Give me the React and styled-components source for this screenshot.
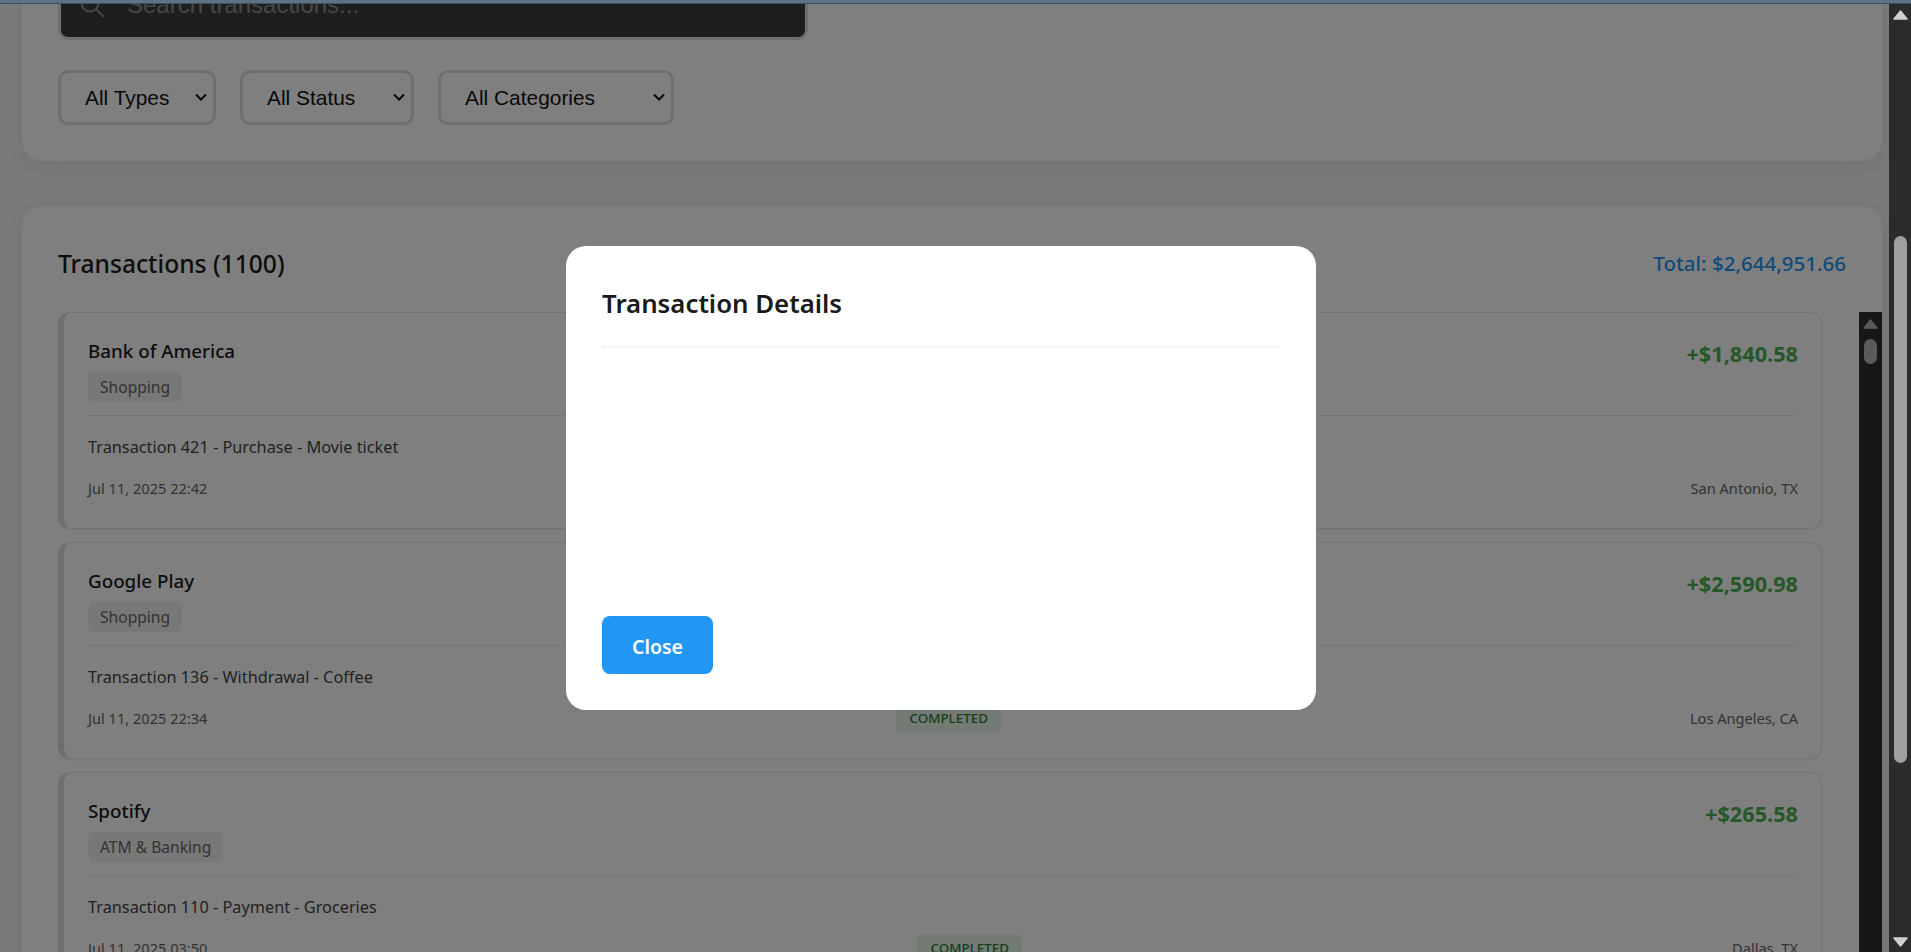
import React from "react";
import styled, { createGlobalStyle } from "styled-components";

const Global = createGlobalStyle`
  html, body {
    margin: 0;
    height: 100%;
    overflow: hidden;
    background: #f5f5f5;
  }
  * {
    box-sizing: border-box;
  }
`;

const UI_FONT = `"Noto Sans", "Open Sans", sans-serif`;

const Shell = styled.div`
  display: flex;
  height: 952px;
  width: 1911px;
  overflow: hidden;
  font-family: ${UI_FONT};
  color: #1a1a1a;
`;
const TopLine = styled.div`
  position: fixed;
  top: 0;
  left: 0;
  right: 0;
  height: 4px;
  background: #5b7384;
  border-bottom: 1px solid #43525c;
  z-index: 30;
`;
const Page = styled.div`
  flex: 1;
  min-width: 0;
  height: 952px;
  overflow: hidden;
  padding: 0 7px 0 22px;
  background: #f5f5f5;
`;
const Panel = styled.section`
  background: #fff;
  border-radius: 20px;
  padding: 36px;
  box-shadow: 0 4px 20px rgba(0, 0, 0, 0.08);
`;
const FilterPanel = styled(Panel)`
  margin-top: -66px;
  margin-bottom: 45px;
`;
const SearchBox = styled.div`
  width: 750px;
  height: 70px;
  display: flex;
  align-items: center;
  gap: 22px;
  padding: 0 19px;
  background: #3c3c3c;
  border: 3px solid #dedede;
  border-radius: 10px;
`;
const SearchText = styled.span`
  font-family: "Liberation Sans", Arial, sans-serif;
  font-size: 24px;
  color: #8f8f8f;
`;
const Filters = styled.div`
  display: flex;
  gap: 24px;
  margin-top: 30px;
`;
const SelectWrap = styled.div`
  position: relative;
  width: ${(p) => p.$width}px;
  height: 55px;
`;
const Select = styled.select`
  appearance: none;
  width: 100%;
  height: 100%;
  padding: 0 0 0 24px;
  font-family: "Liberation Sans", Arial, sans-serif;
  font-size: 20.9px;
  color: #111;
  background: #fff;
  border: 3px solid #dedede;
  border-radius: 10px;
`;
const Chevron = styled.svg`
  position: absolute;
  top: 23px;
  right: 9px;
  pointer-events: none;
`;
const ListPanel = styled(Panel)`
  height: 800px;
  padding-bottom: 0;
`;
const ListHeader = styled.header`
  display: flex;
  justify-content: space-between;
  align-items: center;
  height: 42px;
  margin-bottom: 28px;
`;
const ListTitle = styled.h2`
  margin: 0;
  font-size: 24.6px;
  font-weight: 500;
`;
const Total = styled.span`
  font-size: 20.5px;
  font-weight: 500;
  color: #2196f3;
`;
const ListArea = styled.div`
  position: relative;
  display: flex;
  flex-direction: column;
  gap: 13px;
  margin-right: -36px;
  padding-right: 60px;
`;
const Card = styled.article`
  height: 217px;
  padding: 25px 23px 0 24px;
  background: #fff;
  border: 1px solid #e6e6e6;
  border-left: 6px solid #dcdcdc;
  border-radius: 12px;
  box-shadow: 0 1px 3px rgba(0, 0, 0, 0.06);
`;
const CardTop = styled.div`
  display: flex;
  justify-content: space-between;
  align-items: flex-start;
  height: 78px;
  border-bottom: 1px solid #eee;
`;
const Merchant = styled.div`
  font-size: 18.8px;
  font-weight: 500;
  line-height: 27px;
`;
const Tag = styled.span`
  display: inline-block;
  margin-top: 7px;
  padding: 0 12px;
  height: 30px;
  line-height: 31px;
  font-size: 15.6px;
  color: #666;
  background: #f0f0f0;
  border-radius: 6px;
`;
const Amount = styled.div`
  margin-top: 1px;
  font-size: 21.7px;
  font-weight: 700;
  color: #4caf50;
  line-height: 30px;
`;
const Description = styled.p`
  margin: 18px 0 0;
  font-size: 16.3px;
  line-height: 26px;
  color: #444;
`;
const CardBottom = styled.div`
  display: flex;
  justify-content: space-between;
  align-items: center;
  margin-top: 14px;
  font-size: 14.6px;
  color: #666;
`;
const Status = styled.span`
  padding: 0 13px;
  height: 28px;
  line-height: 28px;
  font-size: 13.4px;
  font-weight: 500;
  color: #2e7d32;
  background: #e8f5e9;
  border-radius: 6px;
`;
const ScrollTrack = styled.div`
  display: flex;
  flex-direction: column;
  align-items: center;
  background: #2b2b2b;
  width: 22px;
  height: 952px;
  padding: 10px 0 5px;
`;
const ScrollThumb = styled.div`
  width: 13px;
  height: 527px;
  margin-top: 215px;
  margin-bottom: auto;
  border-radius: 7px;
  background: #9f9f9f;
`;
const InnerTrack = styled.div`
  position: absolute;
  top: 0;
  right: 0;
  width: 23px;
  height: 640px;
  padding-top: 7px;
  display: flex;
  flex-direction: column;
  align-items: center;
  gap: 9px;
  background: #2e2e2e;
`;
const InnerThumb = styled.div`
  width: 13px;
  height: 25px;
  border-radius: 7px;
  background: #b4b4b4;
`;
const Overlay = styled.div`
  position: fixed;
  top: 3px;
  left: 0;
  right: 22px;
  bottom: 0;
  padding-right: 7px;
  display: flex;
  align-items: center;
  justify-content: center;
  background: rgba(0, 0, 0, 0.5);
  z-index: 20;
`;
const Modal = styled.div`
  width: 750px;
  height: 464px;
  padding: 36px;
  display: flex;
  flex-direction: column;
  align-items: flex-start;
  background: #fff;
  border-radius: 20px;
`;
const ModalTitle = styled.h2`
  width: 100%;
  margin: 0;
  height: 66px;
  font-size: 25.8px;
  font-weight: 600;
  line-height: 42px;
  border-bottom: 2px solid #f4f4f4;
`;
const CloseButton = styled.button`
  margin-top: auto;
  width: 111px;
  height: 58px;
  padding: 3px 0 0;
  font-family: ${UI_FONT};
  font-size: 19.5px;
  font-weight: 600;
  color: #fff;
  background: #2196f3;
  border: none;
  border-radius: 8px;
`;

const Arrow = ({ down, color }) => (
  <svg width="15" height="11" viewBox="0 0 15 11">
    <path d={down ? "M1 2h13L7.5 10z" : "M1 9h13L7.5 1z"} fill={color} stroke={color} strokeWidth="1.5" strokeLinejoin="round" />
  </svg>
);

const filters = [
  { label: "All Types", width: 158 },
  { label: "All Status", width: 174 },
  { label: "All Categories", width: 236 },
];

const transactions = [
  { id: 1, merchant: "Bank of America", tag: "Shopping", amount: "+$1,840.58", text: "Transaction 421 - Purchase - Movie ticket", date: "Jul 11, 2025 22:42", place: "San Antonio, TX" },
  { id: 2, merchant: "Google Play", tag: "Shopping", amount: "+$2,590.98", text: "Transaction 136 - Withdrawal - Coffee", date: "Jul 11, 2025 22:34", place: "Los Angeles, CA" },
  { id: 3, merchant: "Spotify", tag: "ATM & Banking", amount: "+$265.58", text: "Transaction 110 - Payment - Groceries", date: "Jul 11, 2025 03:50", place: "Dallas, TX" },
];

export default function App() {
  return (
    <Shell>
      <Global />
      <TopLine />
      <Page>
        <FilterPanel>
          <SearchBox>
            <svg width="25" height="25" viewBox="0 0 25 25" fill="none" stroke="#8f8f8f" strokeWidth="2">
              <circle cx="10" cy="10" r="8.5" />
              <path d="M16.5 16.5l7.5 7.5" />
            </svg>
            <SearchText>Search transactions...</SearchText>
          </SearchBox>
          <Filters>
            {filters.map((f) => (
              <SelectWrap key={f.label} $width={f.width}>
                <Select defaultValue={f.label}>
                  <option>{f.label}</option>
                </Select>
                <Chevron width="12" height="8" viewBox="0 0 12 8" fill="none" stroke="#111" strokeWidth="2">
                  <path d="M1 1.5l5 5 5-5" />
                </Chevron>
              </SelectWrap>
            ))}
          </Filters>
        </FilterPanel>
        <ListPanel>
          <ListHeader>
            <ListTitle>Transactions (1100)</ListTitle>
            <Total>Total: $2,644,951.66</Total>
          </ListHeader>
          <ListArea>
            {transactions.map((t) => (
              <Card key={t.id}>
                <CardTop>
                  <div>
                    <Merchant>{t.merchant}</Merchant>
                    <Tag>{t.tag}</Tag>
                  </div>
                  <Amount>{t.amount}</Amount>
                </CardTop>
                <Description>{t.text}</Description>
                <CardBottom>
                  <span>{t.date}</span>
                  <Status>COMPLETED</Status>
                  <span>{t.place}</span>
                </CardBottom>
              </Card>
            ))}
            <InnerTrack>
              <Arrow color="#b4b4b4" />
              <InnerThumb />
            </InnerTrack>
          </ListArea>
        </ListPanel>
      </Page>
      <Overlay>
        <Modal>
          <ModalTitle>Transaction Details</ModalTitle>
          <CloseButton>Close</CloseButton>
        </Modal>
      </Overlay>
      <ScrollTrack>
        <Arrow color="#cfcfcf" />
        <ScrollThumb />
        <Arrow down color="#cfcfcf" />
      </ScrollTrack>
    </Shell>
  );
}
